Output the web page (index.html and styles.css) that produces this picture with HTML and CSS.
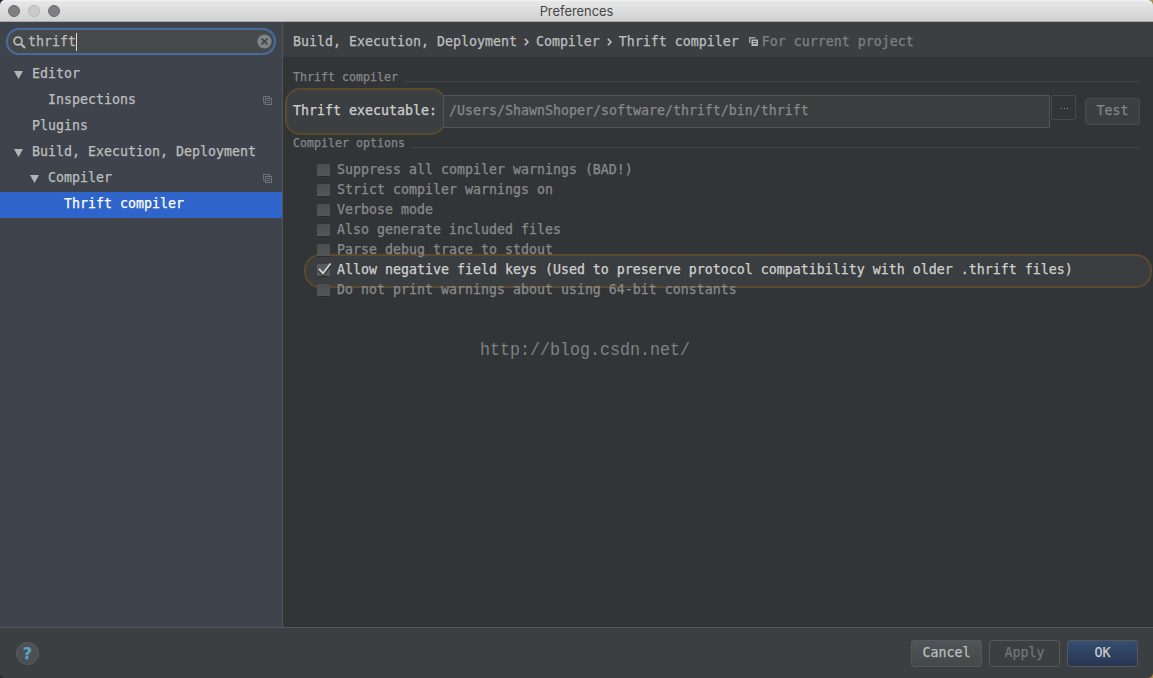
FILE: index.html
```html
<!DOCTYPE html>
<html lang="en">
<head>
<meta charset="utf-8">
<title>Preferences</title>
<link rel="stylesheet" href="styles.css">
</head>
<body>
<svg width="0" height="0" class="defs">
  <symbol id="project" viewBox="0 0 10 10">
    <path d="M2 6.5H.5V.5h6V2" fill="none" stroke="currentColor"/>
    <rect x="2.5" y="2.5" width="6" height="6" fill="none" stroke="currentColor"/>
    <path d="M4 4.5h3M4 6.5h3" stroke="currentColor"/>
  </symbol>
</svg>
<div class="window">
  <header class="titlebar">
    <div class="lights"><i></i><i class="off"></i><i></i></div>
    <span class="title">Preferences</span>
  </header>
  <div class="main">
    <aside class="sidebar">
      <div class="search">
        <svg class="lens" width="13" height="13" viewBox="0 0 13 13"><circle cx="5" cy="5" r="3.9" fill="none" stroke="#b8b9b9" stroke-width="1.8"/><path d="M8 8l4 4" stroke="#b8b9b9" stroke-width="2.3"/></svg>
        <span class="query">thrift</span>
        <svg class="clear" width="15" height="15" viewBox="0 0 15 15"><circle cx="7.5" cy="7.5" r="7.1" fill="#808283"/><path d="M4.6 4.6l5.8 5.8M10.4 4.6l-5.8 5.8" stroke="#3f4344" stroke-width="1.5"/></svg>
      </div>
      <nav class="tree">
        <div class="node open">Editor</div>
        <div class="node l2">Inspections<svg class="scope"><use href="#project"/></svg></div>
        <div class="node">Plugins</div>
        <div class="node open">Build, Execution, Deployment</div>
        <div class="node l2 open">Compiler<svg class="scope"><use href="#project"/></svg></div>
        <div class="node l3 selected">Thrift compiler</div>
      </nav>
    </aside>
    <section class="page">
      <div class="crumbs">
        <span>Build, Execution, Deployment</span>
        <svg class="chev" viewBox="0 0 5 8"><path d="M.8.7L4 4 .8 7.3"/></svg>
        <span>Compiler</span>
        <svg class="chev" viewBox="0 0 5 8"><path d="M.8.7L4 4 .8 7.3"/></svg>
        <span>Thrift compiler</span>
        <svg class="proj" viewBox="0 0 9 9"><path d="M.7 6V.7H6.5" fill="none" stroke="#8fa6b5" stroke-width="1.4"/><path d="M2.5 2.5H9V9H2.5z" fill="#b4b8ba"/><path d="M4 4.5h3.5M4 6.5h3.5" stroke="#45494b"/></svg>
        <span class="dim">For current project</span>
      </div>
      <div class="content">
        <div class="group"><span>Thrift compiler</span></div>
        <div class="exec">
          <label class="exec-label"><span>Thrift executable:</span></label>
          <div class="path">/Users/ShawnShoper/software/thrift/bin/thrift</div>
          <div class="browse"><i></i><i></i><i></i></div>
          <div class="btn test">Test</div>
        </div>
        <div class="group second"><span>Compiler options</span></div>
        <div class="options">
          <div class="opt"><i class="box"></i>Suppress all compiler warnings (BAD!)</div>
          <div class="opt"><i class="box"></i>Strict compiler warnings on</div>
          <div class="opt"><i class="box"></i>Verbose mode</div>
          <div class="opt"><i class="box"></i>Also generate included files</div>
          <div class="opt"><i class="box"></i>Parse debug trace to stdout</div>
          <div class="opt on"><i class="box"><svg viewBox="0 0 15 15"><path d="M2 8l4 4.5L13 3.5" fill="none" stroke="#202224" stroke-width="2.6"/><path d="M2 7l4 4.5L13.5 1.5" fill="none" stroke="#cfcfcf" stroke-width="2"/></svg></i>Allow negative field keys (Used to preserve protocol compatibility with older .thrift files)</div>
          <div class="opt"><i class="box"></i>Do not print warnings about using 64-bit constants</div>
        </div>
        <div class="watermark">http://blog.csdn.net/</div>
      </div>
    </section>
  </div>
  <footer class="footer">
    <div class="help">?</div>
    <div class="btn cancel">Cancel</div>
    <div class="btn apply">Apply</div>
    <div class="btn ok">OK</div>
  </footer>
</div>
</body>
</html>
```
FILE: styles.css
```css
*, *::before, *::after { box-sizing: border-box; }
body {
  margin: 0;
  background: linear-gradient(90deg, #25272a 50%, #b58a35 50%);
  font: 13.29px/20px "DejaVu Sans Mono", monospace;
  color: #bdbebf;
  -webkit-text-stroke: .25px;
  white-space: nowrap;
}
.defs { position: absolute; }
.window {
  width: 1153px;
  height: 678px;
  display: flex;
  flex-direction: column;
  border-radius: 5px;
  overflow: hidden;
  background: #3c3f41;
}
.titlebar {
  height: 22px;
  display: grid;
  grid-template-columns: 200px 1fr 200px;
  align-items: center;
  background: linear-gradient(#f5f5f5 0, #e6e6e6 2px, #d2d2d2 20px);
  border-bottom: 1px solid #aaa;
}
.lights { display: flex; gap: 8px; padding-left: 8px; }
.lights i {
  width: 12px;
  height: 12px;
  border-radius: 50%;
  background: #7f7f83;
  border: 1px solid #6c6c70;
}
.lights .off { background: #cbcbcb; border-color: #b5b5b5; }
.title {
  text-align: center;
  font: 12.9px/20px Inter, sans-serif;
  padding-top: 2px;
  color: #464646;
  -webkit-text-stroke: 0;
}
.main { height: 605px; display: flex; }
.sidebar {
  width: 283px;
  background: #3e434c;
  border-right: 1px solid #515458;
  padding-top: 6px;
}
.search {
  width: 270px;
  height: 27px;
  margin-left: 6px;
  border: 2px solid #466b98;
  box-shadow: 0 0 1px #466d9c;
  border-radius: 14px;
  background: #45494a;
  display: flex;
  align-items: center;
  padding: 0 2px 0 5px;
}
.lens { margin-top: 1px; }
.query {
  margin-left: 2px;
  height: 18px;
  line-height: 18px;
  border-right: 1px solid #ddd;
}
.clear { margin-left: auto; }
.tree { margin-top: 7px; }
.node {
  height: 26px;
  line-height: 23px;
  padding-left: 32px;
  display: flex;
}
.l2 { padding-left: 48px; }
.l3 { padding-left: 64px; }
.selected { background: #2f65ca; color: #fff; }
.open::before {
  content: "";
  width: 9px;
  height: 8px;
  margin: 9px 9px 0 -18px;
  background: #b3b6b8;
  clip-path: polygon(0 0, 100% 0, 50% 100%);
}
.scope {
  width: 10px;
  height: 10px;
  color: #70747a;
  margin: 8px 9px 0 auto;
}
.page { flex: 1; background: #323537; }
.crumbs {
  height: 35px;
  padding-left: 10px;
  background: #3c3f41;
  display: flex;
  align-items: center;
}
.crumbs span { height: 35px; line-height: 39px; }
.chev { width: 5px; height: 8px; margin: 5px 7px 0; }
.chev path { fill: none; stroke: #c4c4c4; stroke-width: 1.6; }
.proj { width: 9px; height: 9px; margin: 4px 4px 0 10px; }
.dim { color: #7f8183; }
.content {
  position: relative;
  z-index: 0;
  padding: 11px 13px 0 10px;
}
.group {
  height: 18px;
  display: flex;
  font-size: 11.63px;
  line-height: 18px;
  color: #85878a;
}
.group::after {
  content: "";
  flex: 1;
  height: 1px;
  margin: 13px 0 0 6px;
  background: #424547;
}
.exec {
  height: 48px;
  display: flex;
  align-items: flex-start;
  padding-top: 9px;
}
.exec-label {
  width: 161px;
  height: 47px;
  margin: -7px -3px 0 -8px;
  padding-left: 6px;
  border: 2px solid #5b4a2c;
  border-radius: 15px;
  background: #3b3f42;
  line-height: 41px;
  color: #d0d0d0;
}
.path {
  width: 607px;
  height: 33px;
  border: 1px solid #515455;
  background: #3b3e3e;
  padding-left: 5px;
  line-height: 29px;
  color: #878a8a;
}
.browse {
  width: 25px;
  height: 25px;
  margin-left: 1px;
  border: 1px solid #47494b;
  border-radius: 2px;
  display: flex;
  gap: 2px;
  padding: 12px 0 0 9px;
}
.browse i { width: 1px; height: 1px; background: #999; }
.btn {
  height: 27px;
  line-height: 24px;
  text-align: center;
  border: 1px solid #55595b;
  border-radius: 3px;
}
.test {
  width: 55px;
  margin: 3px 0 0 9px;
  background: #3b3f40;
  border-color: #484b4d;
  color: #838587;
}
.options { padding: 9px 0 0 24px; }
.opt {
  height: 20px;
  line-height: 17px;
  display: flex;
  color: #898b8c;
  position: relative;
}
.box {
  width: 13px;
  height: 13px;
  margin: 3px 7px 0 0;
  border-radius: 1px;
  background: linear-gradient(#4b4d4e, #545657);
  border-bottom: 1px solid #292c2d;
}
.on { color: #d0d0d0; }
.on .box { background: #57595a; }
.box svg { width: 15px; height: 15px; margin-top: -2px; display: block; }
/* Highlight ring reaches into the neighbouring rows */
.on::before {
  content: "";
  position: absolute;
  z-index: -1;
  left: -13px;
  top: -7px;
  width: 848px;
  height: 34px;
  border: 2px solid #5b4a2c;
  border-radius: 16px;
  background: #3a3e40;
}
.watermark {
  width: 210px;
  margin: 37px 0 0 187px;
  font: 16.66px/24px "Liberation Mono", monospace;
  transform: scaleY(1.15);
  color: #7f8183;
  -webkit-text-stroke: 0;
}
.footer {
  flex: 1;
  border-top: 1px solid #55585a;
  display: flex;
  padding: 12px 15px 0 16px;
}
.help {
  width: 23px;
  height: 23px;
  margin: 2px auto 0 0;
  border: 1px solid #5b5e60;
  border-radius: 50%;
  background: #4b5052;
  text-align: center;
  font: bold 16px/21px "DejaVu Sans", sans-serif;
  color: #5ba3c6;
}
.footer .btn { width: 71px; margin-left: 7px; }
.cancel { background: linear-gradient(#4f5556, #434849); }
.footer .apply { color: #737577; }
.ok { background: linear-gradient(#364e70, #263650); color: #ccc; }
```
